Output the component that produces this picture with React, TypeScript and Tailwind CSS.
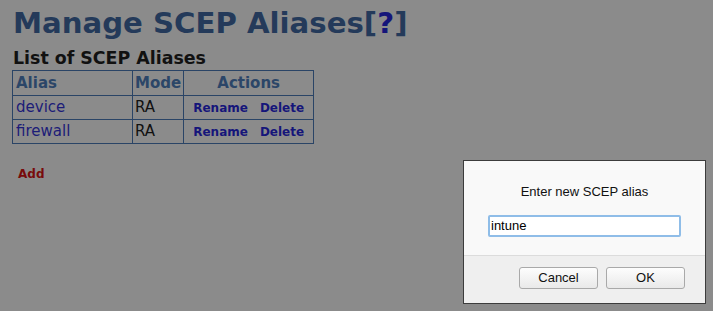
import React from "react";

const rows = [
  { alias: "device", mode: "RA" },
  { alias: "firewall", mode: "RA" },
];

export default function App() {
  return (
    <div className="relative w-[713px] h-[311px] overflow-hidden bg-[#8b8b8b]" style={{ fontFamily: '"DejaVu Sans", Verdana, sans-serif' }}>
      <div className="pl-[13px] pt-[3px]">
        <h1 className="text-[29.2px] leading-[40px] font-bold text-[#243a5a]">
          Manage SCEP Aliases[<span className="text-[#15157a]">?</span>]
        </h1>
        <h2 className="mt-[4px] text-[17.4px] leading-[22px] font-bold text-[#111111]">List of SCEP Aliases</h2>
        <table className="mt-[1px] -ml-px border-collapse border border-[#2a4466] text-[15px]">
          <thead>
            <tr className="h-[25px]">
              <th className="w-[120px] border border-[#2a4466] px-[3px] text-left font-bold text-[#2b4668]">Alias</th>
              <th className="w-[51px] border border-[#2a4466] px-[2px] text-left font-bold text-[#2b4668]">Mode</th>
              <th className="w-[130px] border border-[#2a4466] px-[2px] text-center font-bold text-[#2b4668]">Actions</th>
            </tr>
          </thead>
          <tbody>
            {rows.map((r) => (
              <tr key={r.alias} className="h-[24px]">
                <td className="border border-[#2a4466] px-[3px] text-[#1c1c78]">{r.alias}</td>
                <td className="border border-[#2a4466] px-[2px] text-[#111111]">{r.mode}</td>
                <td className="border border-[#2a4466] px-[2px] text-center text-[12px] font-bold text-[#15157a] whitespace-nowrap">
                  <span className="mr-[12px]">Rename</span>
                  <span>Delete</span>
                </td>
              </tr>
            ))}
          </tbody>
        </table>
        <div className="mt-[21px] ml-[5px] text-[12px] font-bold text-[#780b0b]">Add</div>
      </div>

      {/* prompt dialog */}
      <div
        className="absolute left-[463px] top-[160px] w-[243px] h-[144px] border border-[#3c3c3c] bg-[#f9f9f9] flex flex-col"
        style={{ fontFamily: '"Liberation Sans", Arial, sans-serif' }}
      >
        <div className="flex-1 flex flex-col items-center">
          <div className="mt-[21px] text-[13px] text-[#111]">Enter new SCEP alias</div>
          <div className="mt-[13px] w-[193px] h-[22px] border-2 border-[#8fbde8] bg-white rounded-[2px] flex items-center pl-[1px] text-[13px] text-black">
            intune
          </div>
        </div>
        <div className="h-[48px] border-t border-[#dcdcdc] bg-[#efefef] flex justify-end items-start pt-[11px] pr-[20px] gap-[8px]">
          <button className="w-[79px] h-[22px] border border-[#a9a9a9] rounded-[3px] bg-gradient-to-b from-[#fdfdfd] to-[#e9e9e9] text-[13px] text-[#111]">Cancel</button>
          <button className="w-[79px] h-[22px] border border-[#a9a9a9] rounded-[3px] bg-gradient-to-b from-[#fdfdfd] to-[#e9e9e9] text-[13px] text-[#111]">OK</button>
        </div>
      </div>
    </div>
  );
}
